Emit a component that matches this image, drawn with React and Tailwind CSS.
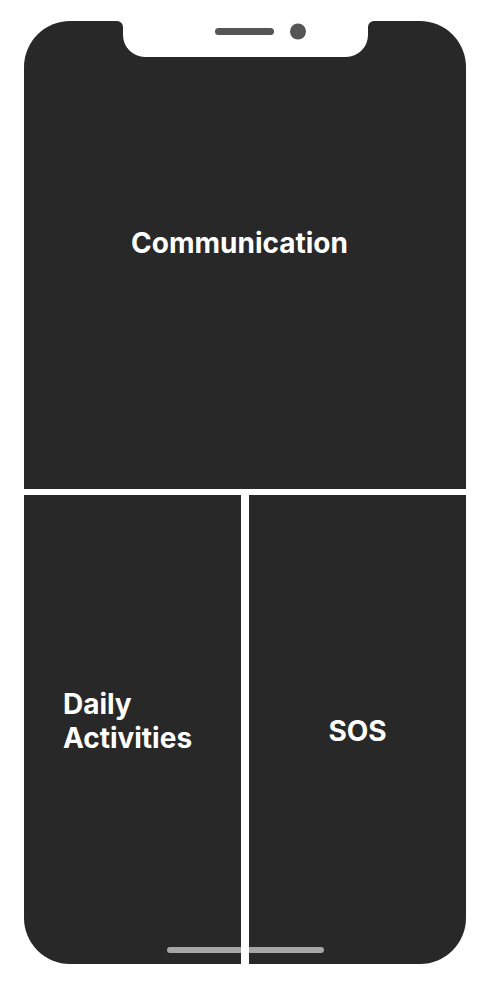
const Notch = () => (
  <svg
    className="absolute top-0 left-[93px]"
    width="257"
    height="36"
    viewBox="0 0 257 36"
  >
    <path
      d="M0 0 A6 6 0 0 1 6 6 V14 A22 22 0 0 0 28 36 H229 A22 22 0 0 0 251 14 V6 A6 6 0 0 1 257 0 Z"
      fill="#ffffff"
    />
    <rect x="98" y="7" width="59" height="7" rx="3.5" fill="#555555" />
    <circle cx="181" cy="10.5" r="8" fill="#555555" />
  </svg>
)

const App = () => {
  return (
    <div className="w-[492px] h-[986px] bg-white font-['Inter',sans-serif] pt-[21px] pl-[24px]">
      <div className="relative w-[442px] h-[943px] rounded-[46px] overflow-hidden flex flex-col gap-[6px]">
        <div className="h-[468px] bg-[#282828] flex items-center justify-center pr-[11px] pb-[25px]">
          <span className="text-white font-bold text-[28px]">Communication</span>
        </div>
        <div className="flex-1 grid grid-cols-2 gap-[8px]">
          <div className="relative bg-[#282828] flex items-center justify-center pr-[10px] pb-[18px]">
            <span className="text-white font-bold text-[28px] leading-[34px]">
              Daily
              <br />
              Activities
            </span>
            <div className="absolute right-0 bottom-[11px] w-[74px] h-[6px] rounded-l-full bg-[#a6a6a6]"></div>
          </div>
          <div className="relative bg-[#282828] flex items-center justify-center pt-[2px]">
            <span className="text-white font-bold text-[28px]">SOS</span>
            <div className="absolute left-0 bottom-[11px] w-[75px] h-[6px] rounded-r-full bg-[#a6a6a6]"></div>
          </div>
        </div>
        <Notch />
      </div>
    </div>
  )
}

export default App
